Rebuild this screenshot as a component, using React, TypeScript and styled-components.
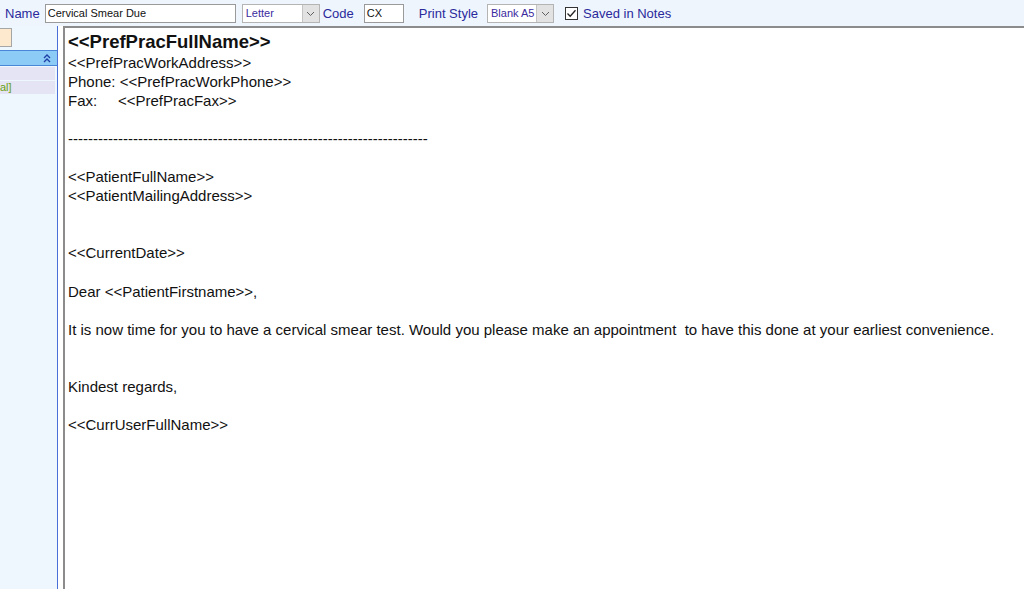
import React from 'react'
import styled, { createGlobalStyle } from 'styled-components'

const Global = createGlobalStyle`
  html, body { margin: 0; padding: 0; background: #fff; }
  body { font-family: "Liberation Sans", Arial, sans-serif; overflow: hidden; }
`

const Window = styled.div`
  width: 1024px;
  height: 589px;
  display: flex;
  flex-direction: column;
  background: #fff;
`

const Toolbar = styled.div`
  height: 26px;
  flex: none;
  display: flex;
  align-items: center;
  background: #eef5fd;
  padding: 1px 0 0 5px;
  box-sizing: border-box;
`

const Label = styled.span<{ gap?: number }>`
  font-size: 13px;
  color: #2a2a9c;
  margin-right: ${(p) => p.gap ?? 6}px;
  white-space: nowrap;
`

const TextBox = styled.div<{ w: number; gap?: number }>`
  width: ${(p) => p.w}px;
  height: 19px;
  box-sizing: border-box;
  border: 1px solid #9a9a9a;
  background: #fff;
  font-size: 11px;
  line-height: 17px;
  padding-left: 2px;
  color: #111;
  margin-right: ${(p) => p.gap ?? 6}px;
`

const Select = styled.div<{ w: number }>`
  width: ${(p) => p.w}px;
  height: 19px;
  box-sizing: border-box;
  border: 1px solid #b4b4b4;
  background: #fff;
  display: flex;
  align-items: stretch;
  margin-right: 3px;
`

const SelectText = styled.span`
  flex: 1;
  font-size: 11px;
  line-height: 17px;
  padding-left: 3px;
  color: #3a2aa0;
  overflow: hidden;
  white-space: nowrap;
`

const SelectButton = styled.span`
  width: 16px;
  background: #e2e2e2;
  border-left: 1px solid #c4c4c4;
  display: flex;
  align-items: center;
  justify-content: center;
`

const Check = styled.span`
  width: 13px;
  height: 13px;
  box-sizing: border-box;
  border: 1px solid #333;
  background: #fff;
  display: inline-flex;
  align-items: center;
  justify-content: center;
  margin: 0 5px 0 8px;
`

const Body = styled.div`
  flex: 1;
  display: flex;
  min-height: 0;
`

const SidePanel = styled.div`
  width: 57px;
  flex: none;
  background: #eef6fe;
  border-right: 1px solid #4a6fd6;
  display: flex;
  flex-direction: column;
  padding-top: 2px;
  overflow: hidden;
`

const PeachBox = styled.div`
  width: 12px;
  height: 19px;
  box-sizing: border-box;
  background: #fde9cd;
  border: 1px solid #a6a6a6;
  border-left: none;
`

const PanelHeader = styled.div`
  margin-top: 3px;
  height: 16px;
  box-sizing: border-box;
  background: #8ccbf6;
  border: 1px solid #4a86d8;
  border-left: none;
  border-right: none;
  display: flex;
  align-items: center;
  justify-content: flex-end;
  padding-right: 6px;
`

const PanelRow = styled.div`
  height: 13px;
  margin: 1px 2px 0 0;
  background: #e4e4f4;
  font-size: 11px;
  line-height: 13px;
  color: #6aa010;
  white-space: nowrap;
`

const Gap = styled.div`
  width: 5px;
  flex: none;
  background: #fff;
`

const Editor = styled.div`
  flex: 1;
  border-left: 2px solid #8c8c8c;
  border-top: 2px solid #8c8c8c;
  padding: 3px 0 0 3px;
  font-family: "Liberation Sans", Arial, sans-serif;
  font-size: 15px;
  line-height: 19.05px;
  color: #111;
  white-space: pre;
  overflow: hidden;
`

const Line = styled.div<{ bold?: boolean }>`
  height: 19.05px;
  ${(p) => (p.bold ? 'font-weight: bold; font-size: 18.5px; line-height: 22px; height: 22px;' : '')}
`

const Chevron = () => (
  <svg width="8" height="9" viewBox="0 0 8 9">
    <path d="M1 4 L4 1 L7 4 M1 8 L4 5 L7 8" fill="none" stroke="#1f3fa8" strokeWidth="1.4" />
  </svg>
)

const Caret = () => (
  <svg width="9" height="6" viewBox="0 0 9 6">
    <path d="M1 1 L4.5 4.5 L8 1" fill="none" stroke="#606060" strokeWidth="1" />
  </svg>
)

const Tick = () => (
  <svg width="11" height="11" viewBox="0 0 11 11">
    <path d="M1.5 5.5 L4.2 8.3 L9.5 2.2" fill="none" stroke="#222" strokeWidth="1.3" />
  </svg>
)

const lines: { text: string; bold?: boolean }[] = [
  { text: '<<PrefPracFullName>>', bold: true },
  { text: '<<PrefPracWorkAddress>>' },
  { text: 'Phone: <<PrefPracWorkPhone>>' },
  { text: 'Fax:     <<PrefPracFax>>' },
  { text: '' },
  { text: '-'.repeat(72) },
  { text: '' },
  { text: '<<PatientFullName>>' },
  { text: '<<PatientMailingAddress>>' },
  { text: '' },
  { text: '' },
  { text: '<<CurrentDate>>' },
  { text: '' },
  { text: 'Dear <<PatientFirstname>>,' },
  { text: '' },
  {
    text: 'It is now time for you to have a cervical smear test. Would you please make an appointment  to have this done at your earliest convenience.',
  },
  { text: '' },
  { text: '' },
  { text: 'Kindest regards,' },
  { text: '' },
  { text: '<<CurrUserFullName>>' },
]

export default function App() {
  return (
    <Window>
      <Global />
      <Toolbar>
        <Label gap={5}>Name</Label>
        <TextBox w={191}>Cervical Smear Due</TextBox>
        <Select w={78}>
          <SelectText>Letter</SelectText>
          <SelectButton>
            <Caret />
          </SelectButton>
        </Select>
        <Label gap={10}>Code</Label>
        <TextBox w={40} gap={15}>CX</TextBox>
        <Label gap={9}>Print Style</Label>
        <Select w={67}>
          <SelectText>Blank A5</SelectText>
          <SelectButton>
            <Caret />
          </SelectButton>
        </Select>
        <Check>
          <Tick />
        </Check>
        <Label>Saved in Notes</Label>
      </Toolbar>
      <Body>
        <SidePanel>
          <PeachBox />
          <PanelHeader>
            <Chevron />
          </PanelHeader>
          <PanelRow />
          <PanelRow>al]</PanelRow>
        </SidePanel>
        <Gap />
        <Editor>
          {lines.map((l, i) => (
            <Line key={i} bold={l.bold}>
              {l.text}
            </Line>
          ))}
        </Editor>
      </Body>
    </Window>
  )
}
